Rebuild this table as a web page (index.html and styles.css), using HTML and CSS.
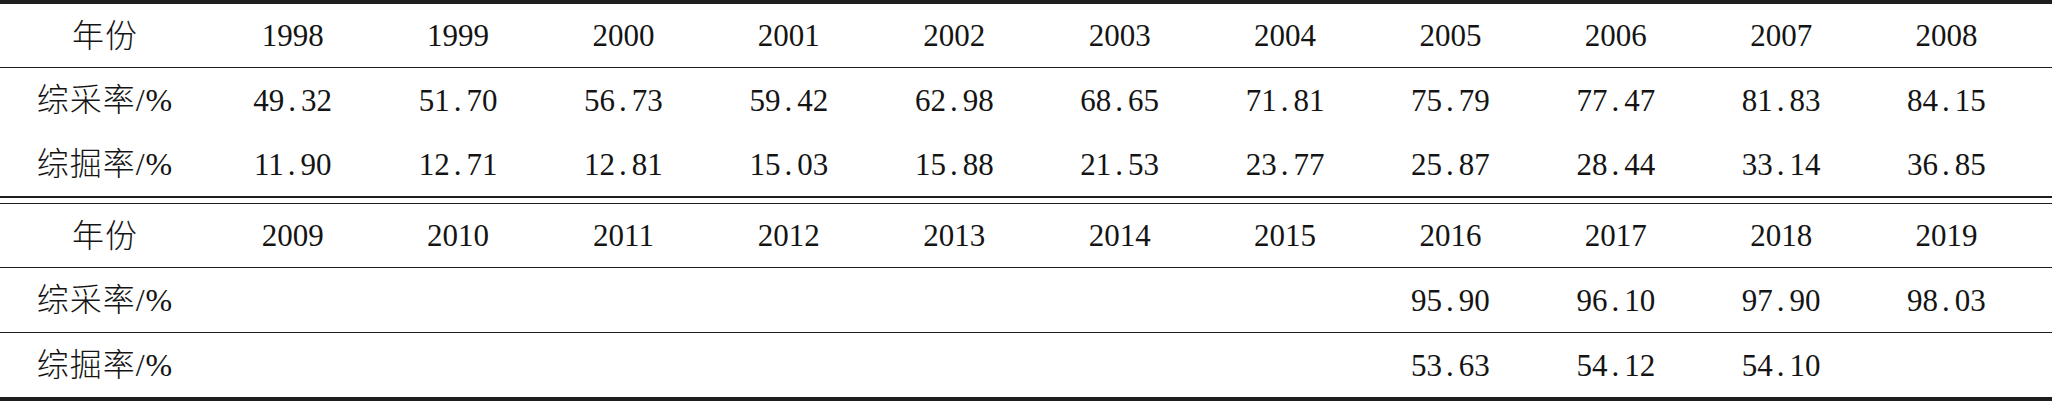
FILE: index.html
```html
<!DOCTYPE html>
<html lang="zh">
<head>
<meta charset="utf-8">
<link rel="stylesheet" href="styles.css">
</head>
<body>
<div class="wrap">
<table class="tbl tbl-top">
<colgroup><col class="c-label"><col class="c"><col class="c"><col class="c"><col class="c"><col class="c"><col class="c"><col class="c"><col class="c"><col class="c"><col class="c"><col class="c-last"></colgroup>
<tr class="head">
<td class="lab">年份</td><td>1998</td><td>1999</td><td>2000</td><td>2001</td><td>2002</td><td>2003</td><td>2004</td><td>2005</td><td>2006</td><td>2007</td><td class="last">2008</td>
</tr>
<tr class="row">
<td class="lab">综采率/%</td><td>49<span class="pt">.</span>32</td><td>51<span class="pt">.</span>70</td><td>56<span class="pt">.</span>73</td><td>59<span class="pt">.</span>42</td><td>62<span class="pt">.</span>98</td><td>68<span class="pt">.</span>65</td><td>71<span class="pt">.</span>81</td><td>75<span class="pt">.</span>79</td><td>77<span class="pt">.</span>47</td><td>81<span class="pt">.</span>83</td><td class="last">84<span class="pt">.</span>15</td>
</tr>
<tr class="row">
<td class="lab">综掘率/%</td><td>11<span class="pt">.</span>90</td><td>12<span class="pt">.</span>71</td><td>12<span class="pt">.</span>81</td><td>15<span class="pt">.</span>03</td><td>15<span class="pt">.</span>88</td><td>21<span class="pt">.</span>53</td><td>23<span class="pt">.</span>77</td><td>25<span class="pt">.</span>87</td><td>28<span class="pt">.</span>44</td><td>33<span class="pt">.</span>14</td><td class="last">36<span class="pt">.</span>85</td>
</tr>
</table>
<table class="tbl tbl-bottom">
<colgroup><col class="c-label"><col class="c"><col class="c"><col class="c"><col class="c"><col class="c"><col class="c"><col class="c"><col class="c"><col class="c"><col class="c"><col class="c-last"></colgroup>
<tr class="head">
<td class="lab">年份</td><td>2009</td><td>2010</td><td>2011</td><td>2012</td><td>2013</td><td>2014</td><td>2015</td><td>2016</td><td>2017</td><td>2018</td><td class="last">2019</td>
</tr>
<tr class="row sep">
<td class="lab">综采率/%</td><td></td><td></td><td></td><td></td><td></td><td></td><td></td><td>95<span class="pt">.</span>90</td><td>96<span class="pt">.</span>10</td><td>97<span class="pt">.</span>90</td><td class="last">98<span class="pt">.</span>03</td>
</tr>
<tr class="row">
<td class="lab">综掘率/%</td><td></td><td></td><td></td><td></td><td></td><td></td><td></td><td>53<span class="pt">.</span>63</td><td>54<span class="pt">.</span>12</td><td>54<span class="pt">.</span>10</td><td class="last"></td>
</tr>
</table>
</div>
</body>
</html>
```

FILE: styles.css
```css
html, body {
  margin: 0;
  padding: 0;
  background: #ffffff;
}

.wrap {
  width: 2052px;
}

.tbl {
  width: 2052px;
  table-layout: fixed;
  border-collapse: collapse;
  border-spacing: 0;
  font-family: "Liberation Serif", "Noto Sans CJK SC", serif;
  font-size: 31px;
  color: #141414;
}

.c-label { width: 210px; }
.c { width: 165.4px; }
.c-last { width: 188px; }

.tbl td {
  padding: 0;
  text-align: center;
  vertical-align: middle;
  white-space: nowrap;
  line-height: 1;
}

.tbl td.last {
  padding-right: 23px;
}

.tbl td.lab {
  font-family: "Liberation Serif", "Noto Sans CJK SC Light", "Noto Sans CJK SC", serif;
  font-weight: 300;
  font-size: 32px;
  letter-spacing: 1px;
}

.tbl .pt {
  margin: 0 5px 0 4px;
}

.tbl-top {
  border-top: 4px solid #1e1e1e;
  border-bottom: 2px solid #1e1e1e;
  margin-bottom: 5px;
}

.tbl-bottom {
  border-top: 1px solid #1e1e1e;
  border-bottom: 4px solid #1e1e1e;
}

.tbl .head td {
  height: 63px;
  border-bottom: 1px solid #1e1e1e;
}

.tbl .row td {
  height: 64px;
}

.tbl .row.sep td {
  border-bottom: 1px solid #1e1e1e;
}
```
